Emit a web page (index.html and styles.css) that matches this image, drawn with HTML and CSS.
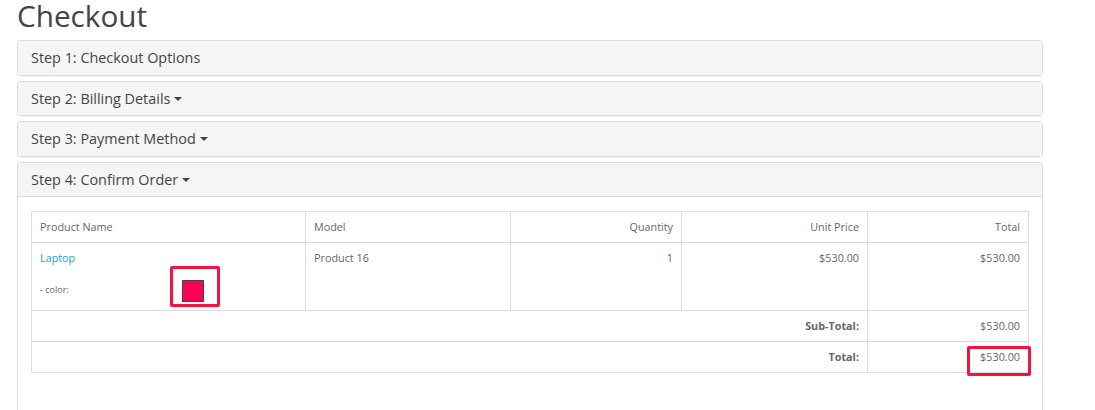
FILE: index.html
```html
<!DOCTYPE html>
<html>
<head>
<meta charset="utf-8">
<link rel="stylesheet" href="styles.css">
</head>
<body>
<div class="page">
  <h1 class="title">Checkout</h1>
  <div class="panel-group">
    <div class="panel"><div class="panel-heading">Step 1: Checkout Options</div></div>
    <div class="panel"><div class="panel-heading">Step 2: Billing Details <span class="caret"></span></div></div>
    <div class="panel"><div class="panel-heading">Step 3: Payment Method <span class="caret"></span></div></div>
    <div class="panel panel-open">
      <div class="panel-heading">Step 4: Confirm Order <span class="caret"></span></div>
      <div class="panel-body">
        <table class="cart">
          <colgroup>
            <col class="c1"><col class="c2"><col class="c3"><col class="c4"><col class="c5">
          </colgroup>
          <thead>
            <tr>
              <td>Product Name</td>
              <td>Model</td>
              <td class="r">Quantity</td>
              <td class="r">Unit Price</td>
              <td class="r">Total</td>
            </tr>
          </thead>
          <tbody>
            <tr class="prod">
              <td>
                <a class="link" href="#">Laptop</a>
                <div class="opt">
                  <span class="opt-label">- color:</span>
                  <span class="swatch"></span>
                </div>
              </td>
              <td>Product 16</td>
              <td class="r">1</td>
              <td class="r">$530.00</td>
              <td class="r">$530.00</td>
            </tr>
          </tbody>
          <tfoot>
            <tr>
              <td colspan="4" class="r"><strong>Sub-Total:</strong></td>
              <td class="r">$530.00</td>
            </tr>
            <tr>
              <td colspan="4" class="r"><strong>Total:</strong></td>
              <td class="r"><span class="mark">$530.00</span></td>
            </tr>
          </tfoot>
        </table>
      </div>
    </div>
  </div>
</div>
</body>
</html>
```

FILE: styles.css
```css
* { box-sizing: border-box; }
html, body { margin: 0; padding: 0; background: #fff; }
body {
  font-family: "Open Sans", "DejaVu Sans", sans-serif;
  color: #666;
  font-size: 10.8px;
  overflow: hidden;
  height: 410px;
}
.page { padding-left: 17px; width: 1043px; }
.title {
  margin: 0 0 9px;
  font-size: 29.7px;
  font-weight: normal;
  line-height: 31px;
  color: #444;
}
.panel-group { display: flex; flex-direction: column; gap: 5px; }
.panel {
  border: 1px solid #ddd;
  border-radius: 4px;
  background: #fff;
  box-shadow: 0 1px 1px rgba(0,0,0,0.05);
}
.panel-heading {
  background: #f5f5f5;
  color: #444;
  font-size: 14.4px;
  line-height: 20px;
  height: 33.67px;
  padding: 7px 13px;
  border-radius: 3px 3px 0 0;
}
.panel-open { border-bottom: none; border-radius: 4px 4px 0 0; min-height: 260px; }
.panel-open .panel-heading { border-bottom: 1px solid #ddd; height: 34px; }
.caret {
  display: inline-block;
  width: 0; height: 0;
  vertical-align: middle;
  margin-left: 0;
  margin-top: -2px;
  border-top: 4px solid #444;
  border-left: 4px solid transparent;
  border-right: 4px solid transparent;
}
.panel-body { padding: 14px 14px 14px 13px; }
.cart {
  width: 997px;
  table-layout: fixed;
  border-collapse: collapse;
}
.c1 { width: 274px; }
.c2 { width: 205px; }
.c3 { width: 171px; }
.c4 { width: 186px; }
.c5 { width: 161px; }
.cart td {
  border: 1px solid #ddd;
  padding: 8px;
  line-height: 14px;
  vertical-align: top;
  color: #666;
}
.cart td.r { text-align: right; }
.cart strong { font-weight: bold; color: #666; }
.link { color: #23a1d1; text-decoration: none; }
.opt {
  display: grid;
  grid-template-columns: 142px 22px;
  align-items: end;
  height: 37px;
  font-size: 9px;
}
.opt-label { line-height: 14px; margin-bottom: 5px; }
.swatch {
  position: relative;
  display: block;
  width: 22px;
  height: 22px;
  background: #ff0052;
  border: 1px solid #444;
}
.swatch::after {
  content: "";
  position: absolute;
  top: -15px; left: -13px; right: -17px; bottom: -6px;
  border: 3px solid #f5123c;
  border-radius: 2px;
}
.mark { position: relative; display: inline-block; }
.mark::after {
  content: "";
  position: absolute;
  top: -4px; left: -13px; right: -11px; bottom: -12px;
  border: 3px solid #f5123c;
  border-radius: 2px;
}
```
